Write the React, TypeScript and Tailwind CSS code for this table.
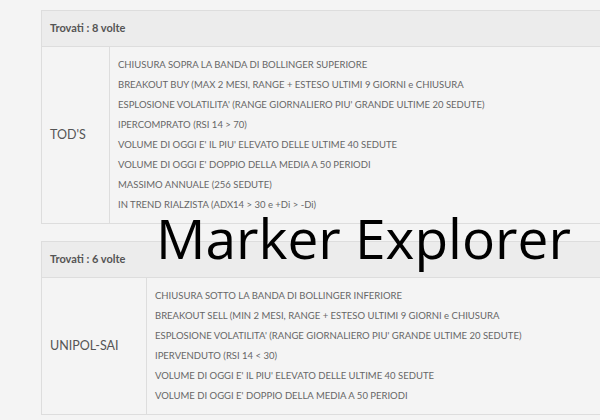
import React from 'react';

type Result = {
  name: string;
  count: number;
  nameWidth: string;
  signals: string[];
};

const results: Result[] = [
  {
    name: "TOD'S",
    count: 8,
    nameWidth: 'w-[68px]',
    signals: [
      'CHIUSURA SOPRA LA BANDA DI BOLLINGER SUPERIORE',
      'BREAKOUT BUY (MAX 2 MESI, RANGE + ESTESO ULTIMI 9 GIORNI e CHIUSURA',
      "ESPLOSIONE VOLATILITA' (RANGE GIORNALIERO PIU' GRANDE ULTIME 20 SEDUTE)",
      'IPERCOMPRATO (RSI 14 > 70)',
      "VOLUME DI OGGI E' IL PIU' ELEVATO DELLE ULTIME 40 SEDUTE",
      "VOLUME DI OGGI E' DOPPIO DELLA MEDIA A 50 PERIODI",
      'MASSIMO ANNUALE (256 SEDUTE)',
      'IN TREND RIALZISTA (ADX14 > 30 e +Di > -Di)',
    ],
  },
  {
    name: 'UNIPOL-SAI',
    count: 6,
    nameWidth: 'w-[105px]',
    signals: [
      'CHIUSURA SOTTO LA BANDA DI BOLLINGER INFERIORE',
      'BREAKOUT SELL (MIN 2 MESI, RANGE + ESTESO ULTIMI 9 GIORNI e CHIUSURA',
      "ESPLOSIONE VOLATILITA' (RANGE GIORNALIERO PIU' GRANDE ULTIME 20 SEDUTE)",
      'IPERVENDUTO (RSI 14 < 30)',
      "VOLUME DI OGGI E' IL PIU' ELEVATO DELLE ULTIME 40 SEDUTE",
      "VOLUME DI OGGI E' DOPPIO DELLA MEDIA A 50 PERIODI",
    ],
  },
];

const ResultPanel: React.FC<{ result: Result }> = ({ result }) => (
  <div className="w-[600px] border border-[#dddddd] bg-[#f4f4f4]">
    {/* Header */}
    <div className="h-[36px] flex items-center px-2 bg-[#ececec] border-b border-[#dddddd]">
      <span className="text-[11px] font-bold text-[#555555]">Trovati : {result.count} volte</span>
    </div>

    {/* Body */}
    <div className="flex">
      <div className={`${result.nameWidth} shrink-0 flex items-center pl-2 border-r border-[#dddddd]`}>
        <span className="text-[12.5px] text-[#555555]">{result.name}</span>
      </div>
      <div className="flex-1 py-2 pl-2">
        {result.signals.map((s, i) => (
          <div key={i} className="h-5 flex items-center text-[9.5px] text-[#666666] whitespace-nowrap">
            {s}
          </div>
        ))}
      </div>
    </div>
  </div>
);

export default function App() {
  return (
    <div className="relative w-[600px] h-[420px] overflow-hidden bg-[#f4f4f4] font-['Lato',sans-serif]">
      <div className="flex flex-col gap-[17px] pt-[10px] pl-[41px]">
        {results.map(r => (
          <ResultPanel key={r.name} result={r} />
        ))}
      </div>

      {/* Watermark */}
      <div className="absolute left-[156px] top-[210px] text-[55px] leading-none text-black font-['Open_Sans',sans-serif]">
        Marker Explorer
      </div>
    </div>
  );
}
